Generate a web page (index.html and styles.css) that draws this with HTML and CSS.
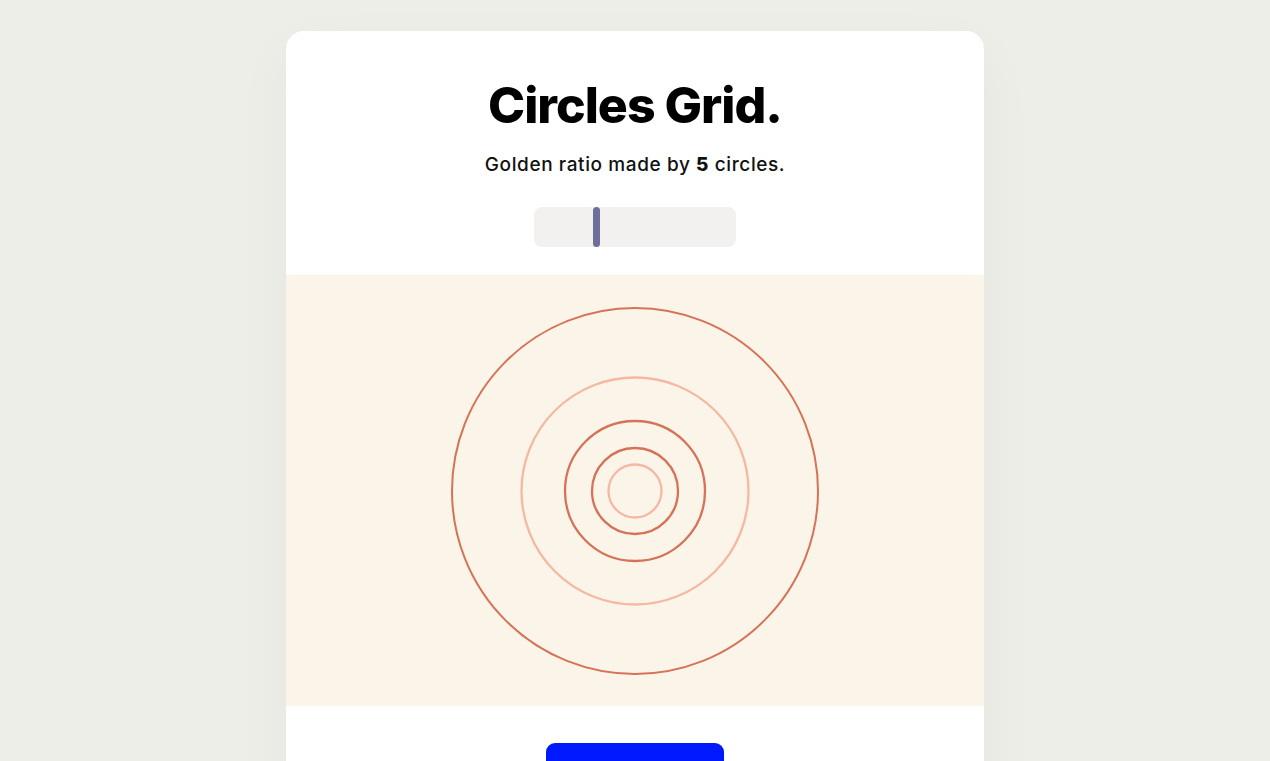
FILE: index.html
```html
<!DOCTYPE html>
<html lang="en">
<head>
<meta charset="utf-8">
<title>Circles Grid</title>
<link rel="stylesheet" href="styles.css">
</head>
<body>
<main class="card">
  <header class="head">
    <h1 class="title">Circles Grid.</h1>
    <p class="subtitle">Golden ratio made by <strong>5</strong> circles.</p>
    <div class="slider"><span class="thumb"></span></div>
  </header>
  <section class="canvas">
    <svg class="rings" width="370" height="370" viewBox="0 0 370 370">
      <circle cx="185" cy="185" r="183" class="dark thin"/>
      <circle cx="185" cy="185" r="113.5" class="light"/>
      <circle cx="185" cy="185" r="70" class="dark"/>
      <circle cx="185" cy="185" r="43" class="dark"/>
      <circle cx="185" cy="185" r="26.5" class="light"/>
    </svg>
  </section>
  <footer class="foot">
    <button class="btn">Randomize</button>
  </footer>
</main>
</body>
</html>
```
FILE: styles.css
```css
* { box-sizing: border-box; }
html, body { margin: 0; padding: 0; }
html { height: 761px; overflow: hidden; }
body {
  background: #eeeee9;
  font-family: "Open Sans", "Noto Sans", sans-serif;
  display: flex;
  justify-content: center;
  align-items: flex-start;
  padding-top: 31px;
}
.card {
  width: 698px;
  background: #fff;
  border-radius: 18px;
  box-shadow: 0 20px 60px rgba(0,0,0,0.04);
  overflow: hidden;
  flex-shrink: 0;
}
.head {
  display: flex;
  flex-direction: column;
  align-items: center;
  padding-top: 45px;
  height: 244px;
}
.title {
  margin: 0;
  font-family: "Inter", sans-serif;
  font-weight: 800;
  font-size: 50px;
  letter-spacing: -1px;
  line-height: 58px;
  color: #000;
}
.subtitle {
  margin: 19px 0 0;
  font-family: "Inter", sans-serif;
  font-size: 19px;
  font-weight: 500;
  letter-spacing: 0.6px;
  color: #111;
  line-height: 24px;
}
.subtitle strong { font-weight: 800; }
.slider {
  margin-top: 30px;
  width: 202px;
  height: 40px;
  background: #f2f1ef;
  border-radius: 8px;
  padding-left: 59px;
}
.thumb {
  display: block;
  width: 7px;
  height: 40px;
  background: #6d6f99;
  border-radius: 4px;
}
.canvas {
  height: 431px;
  background: #fbf5e9;
  display: flex;
  align-items: center;
  justify-content: center;
}
.rings { display: block; }
.rings circle { fill: none; stroke-width: 2.3; }
.rings .thin { stroke-width: 2; }
.rings .dark { stroke: #d67257; }
.rings .light { stroke: #f6b8a3; }
.foot {
  display: flex;
  justify-content: center;
  padding-top: 37px;
  padding-bottom: 40px;
}
.btn {
  width: 178px;
  height: 52px;
  background: #0019ff;
  color: #fff;
  border: none;
  border-radius: 9px;
  font-family: "Inter", sans-serif;
  font-weight: 600;
  font-size: 16px;
  padding-top: 14px;
}
```
